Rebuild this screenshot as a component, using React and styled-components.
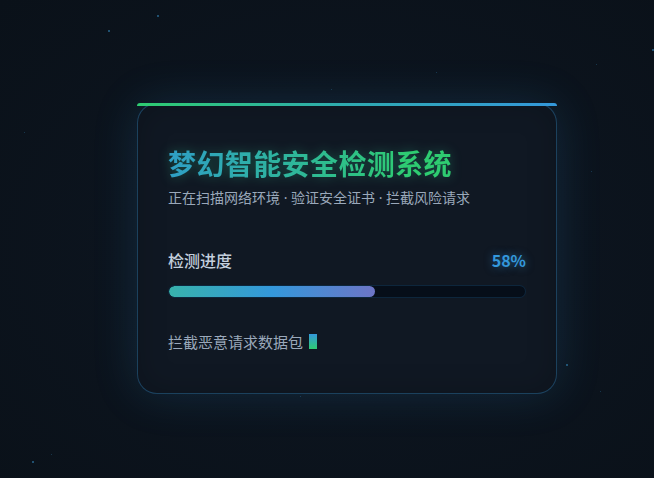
import React from 'react';
import styled, { createGlobalStyle } from 'styled-components';

const GlobalStyle = createGlobalStyle`
  html, body { margin: 0; padding: 0; }
  body {
    background: #0b121b;
    font-family: "Noto Sans CJK SC", "Noto Sans", sans-serif;
  }
`;

const Page = styled.div`
  position: relative;
  width: 654px;
  height: 478px;
  overflow: hidden;
  display: flex;
  align-items: flex-start;
  justify-content: flex-start;
  padding: 103px 0 0 137px;
  box-sizing: border-box;
  background: radial-gradient(ellipse at 53% 52%, #0f1a26 0%, #0c141e 45%, #0a1119 100%);
`;

const Star = styled.span`
  position: absolute;
  width: ${({ size }) => size}px;
  height: ${({ size }) => size}px;
  border-radius: 50%;
  background: #2b6f9a;
  opacity: ${({ dim }) => (dim ? 0.5 : 0.9)};
`;

const Card = styled.div`
  position: relative;
  width: 420px;
  box-sizing: border-box;
  padding: 42px 30px 41px;
  background: #101823;
  border: 1px solid rgba(52, 152, 219, 0.32);
  border-radius: 20px;
  box-shadow: 0 0 45px rgba(52, 152, 219, 0.17), inset 0 0 30px rgba(0, 0, 0, 0.2);

  &::before {
    content: '';
    position: absolute;
    top: -1px;
    left: -1px;
    right: -1px;
    height: 3px;
    border-radius: 3px 3px 0 0;
    background: linear-gradient(90deg, #2ecc71, #2eaab0 50%, #3498db);
  }
`;

const Title = styled.h1`
  margin: 0 0 8px;
  font-size: 28px;
  line-height: 34px;
  font-weight: 700;
  letter-spacing: 0.4px;
  background: linear-gradient(90deg, #2f9fc6, #2ecc71 85%);
  -webkit-background-clip: text;
  background-clip: text;
  color: transparent;
  filter: drop-shadow(0 0 6px rgba(46, 204, 150, 0.35));
  display: inline-block;
`;

const Subtitle = styled.p`
  margin: 0 0 41px;
  font-family: "Noto Sans", "Noto Sans CJK SC", sans-serif;
  font-size: 14px;
  line-height: 20px;
  color: #9aa8ba;
`;

const ProgressHead = styled.div`
  display: flex;
  justify-content: space-between;
  align-items: center;
  margin-bottom: 14px;
  line-height: 22px;
`;

const Label = styled.span`
  font-size: 16px;
  font-weight: 500;
  color: #c3cfdd;
`;

const Percent = styled.span`
  font-size: 16px;
  font-weight: 600;
  color: #3498db;
  text-shadow: 0 0 8px rgba(52, 152, 219, 0.55);
`;

const Track = styled.div`
  height: 13px;
  box-sizing: border-box;
  border-radius: 7px;
  background: #060e19;
  border: 1px solid rgba(52, 152, 219, 0.18);
  overflow: hidden;
  margin-bottom: 33px;
`;

const Fill = styled.div`
  height: 100%;
  border-radius: 7px;
  background: linear-gradient(90deg, #38b2ac, #3498db 50%, #6d75c6);
`;

const Status = styled.div`
  display: flex;
  align-items: center;
  gap: 6px;
  font-size: 15px;
  line-height: 21px;
  color: #9aa8ba;
`;

const Cursor = styled.span`
  display: inline-block;
  width: 8px;
  height: 15px;
  background: linear-gradient(180deg, #3498db, #2ecc71);
`;

const stars = [
  { x: 157, y: 15, s: 2 },
  { x: 108, y: 30, s: 2 },
  { x: 652, y: 49, s: 2 },
  { x: 566, y: 364, s: 2 },
  { x: 32, y: 461, s: 2 },
  { x: 51, y: 454, s: 1, d: true },
  { x: 300, y: 396, s: 1, d: true },
  { x: 331, y: 89, s: 1, d: true },
  { x: 436, y: 72, s: 1, d: true },
  { x: 24, y: 132, s: 1, d: true },
  { x: 591, y: 171, s: 1, d: true },
  { x: 600, y: 391, s: 1, d: true },
  { x: 613, y: 510, s: 1, d: true },
  { x: 596, y: 64, s: 1, d: true },
];

export default function App() {
  const progress = 58;
  return (
    <>
      <GlobalStyle />
      <Page>
        {stars.map((st, i) => (
          <Star key={i} size={st.s} dim={st.d} style={{ left: st.x, top: st.y }} />
        ))}
        <Card>
          <Title>梦幻智能安全检测系统</Title>
          <Subtitle>正在扫描网络环境 · 验证安全证书 · 拦截风险请求</Subtitle>
          <ProgressHead>
            <Label>检测进度</Label>
            <Percent>{progress}%</Percent>
          </ProgressHead>
          <Track>
            <Fill style={{ width: `${progress}%` }} />
          </Track>
          <Status>
            拦截恶意请求数据包
            <Cursor />
          </Status>
        </Card>
      </Page>
    </>
  );
}
